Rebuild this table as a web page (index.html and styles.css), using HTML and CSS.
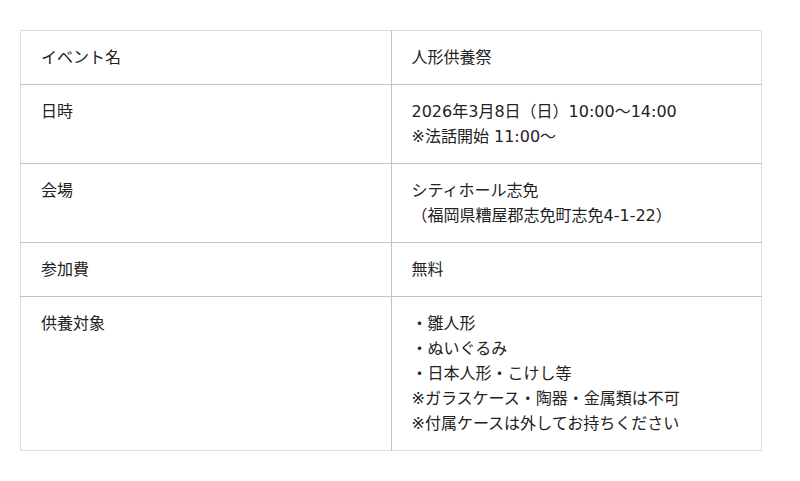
FILE: index.html
```html
<!DOCTYPE html>
<html lang="ja">
<head>
<meta charset="utf-8">
<link rel="stylesheet" href="styles.css">
</head>
<body>
<table class="info">
  <tr><th>イベント名</th><td>人形供養祭</td></tr>
  <tr><th>日時</th><td>2026年3月8日（日）10:00〜14:00<br>※法話開始 11:00〜</td></tr>
  <tr><th>会場</th><td>シティホール志免<br>（福岡県糟屋郡志免町志免4-1-22）</td></tr>
  <tr><th>参加費</th><td>無料</td></tr>
  <tr><th>供養対象</th><td>・雛人形<br>・ぬいぐるみ<br>・日本人形・こけし等<br>※ガラスケース・陶器・金属類は不可<br>※付属ケースは外してお持ちください</td></tr>
</table>
</body>
</html>
```
FILE: styles.css
```css
html, body {
  margin: 0;
  background: #fff;
}
body {
  padding: 30px 20px;
  font-family: "DejaVu Sans", "Noto Sans CJK JP", sans-serif;
  font-size: 16px;
  color: #222;
}
.info {
  width: 742px;
  border-collapse: collapse;
  border: 1px solid #ddd;
}
.info th, .info td {
  width: 50%;
  text-align: left;
  font-weight: normal;
  vertical-align: top;
  padding: 14px 20px 14px 20px;
  line-height: 25px;
  border-top: 1px solid #c4c4c4;
  border-bottom: 1px solid #c4c4c4;
}
.info th {
  border-right: 1px solid #c4c4c4;
}
.info tr:first-child th, .info tr:first-child td {
  border-top: 1px solid #ddd;
}
.info tr:last-child th, .info tr:last-child td {
  border-bottom: 1px solid #ddd;
}
```
